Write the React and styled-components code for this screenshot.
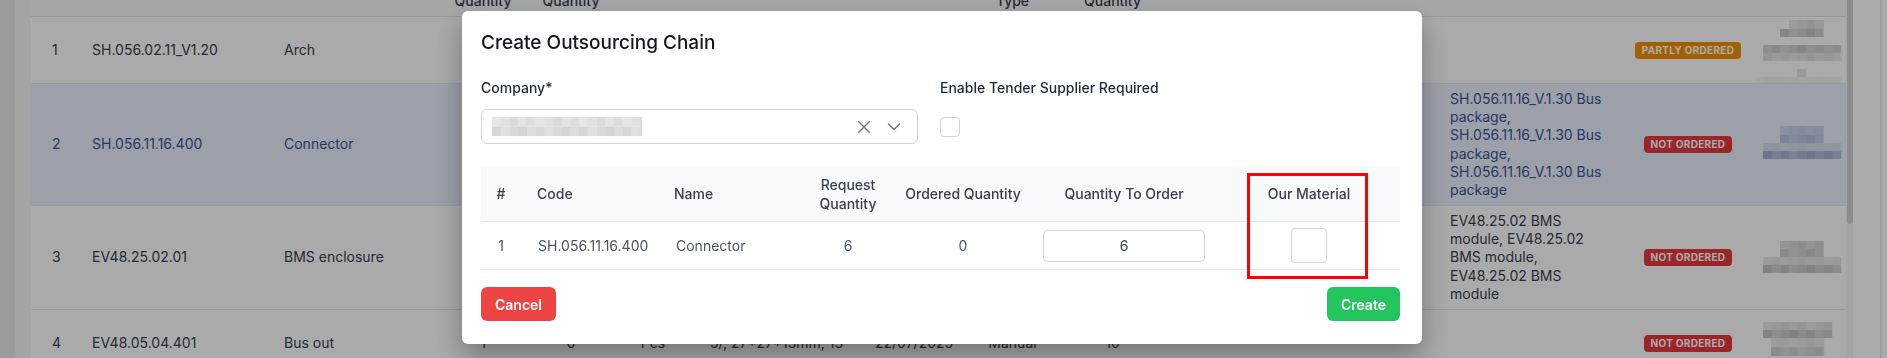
import React from 'react';
import styled, { createGlobalStyle } from 'styled-components';

const GlobalStyle = createGlobalStyle`
  html, body { margin: 0; padding: 0; }
  body {
    font-family: Inter, "Noto Sans", sans-serif;
    background: #ffffff;
    overflow: hidden;
    -webkit-font-smoothing: antialiased;
  }
  #root { height: 358px; overflow: hidden; }
`;

/* ---------- background page ---------- */

const Page = styled.div`
  display: flex;
  height: 358px;
  overflow: hidden;
  background: #ffffff;
`;

const SideStrip = styled.div`
  flex: 0 0 15px;
  background: #e9e9e9;
`;

const Gutter = styled.div`
  flex: 0 0 16px;
  background: #f6f6f6;
`;

const TableArea = styled.div`
  flex: 0 0 1815px;
  background: #ffffff;
  overflow: hidden;
  color: #374151;
  font-size: 14px;
`;

const ScrollTrack = styled.div`
  flex: 0 0 7px;
  background: #f7f7f7;
  display: flex;
  justify-content: center;
`;

const ScrollThumb = styled.div`
  width: 6px;
  height: 224px;
  background: #d3d3d8;
  border-radius: 0 0 3px 3px;
`;

const RightGutter = styled.div`
  flex: 1 1 auto;
  display: flex;
  justify-content: flex-end;
  background: #ffffff;
`;

const WindowEdge = styled.div`
  width: 5px;
  border-left: 2px solid #efefef;
  background: #ffffff;
`;

const BG_COLS = [
  { w: 40, al: 'left', pl: 21 },
  { w: 192, al: 'left', pl: 21 },
  { w: 177, al: 'left', pl: 21 },
  { w: 86, al: 'center', pl: 0 },
  { w: 90, al: 'center', pl: 0 },
  { w: 74, al: 'center', pl: 0 },
  { w: 170, al: 'left', pl: 20 },
  { w: 110, al: 'left', pl: 15 },
  { w: 85, al: 'center', pl: 0 },
  { w: 115, al: 'center', pl: 0 },
  { w: 259, al: 'left', pl: 21 },
  { w: 191, al: 'left', pl: 21, pr: 6 },
  { w: 136, al: 'center', pl: 0 },
  { w: 90, al: 'left', pl: 0 },
];
const bgTemplate = BG_COLS.map((c) => `${c.w}px`).join(' ');

const BgHeadRow = styled.div`
  display: grid;
  grid-template-columns: ${bgTemplate};
  height: 49px;
  margin-top: -32px;
  box-sizing: border-box;
  background: #f9fafb;
  border-bottom: 1px solid #dde2ea;
  font-weight: 500;
  color: #374151;
`;

const BgRow = styled.div`
  display: grid;
  grid-template-columns: ${bgTemplate};
  min-height: ${(p) => p.$h}px;
  box-sizing: border-box;
  border-bottom: 1px solid #e3e7ee;
  background: ${(p) => (p.$selected ? '#eaf0fd' : '#ffffff')};
  color: ${(p) => (p.$selected ? '#3a5596' : '#374151')};
`;

const BgCell = styled.div`
  display: flex;
  align-items: center;
  justify-content: ${(p) => (p.$align === 'center' ? 'center' : 'flex-start')};
  text-align: ${(p) => p.$align};
  padding-left: ${(p) => p.$pl}px;
  padding-right: ${(p) => p.$pr || 0}px;
  line-height: 18.3px;
  min-width: 0;
  white-space: nowrap;
`;

const StackLines = styled.div`
  display: flex;
  flex-direction: column;
  align-items: ${(p) => (p.$center ? 'center' : 'flex-start')};
  line-height: ${(p) => p.$lh}px;
`;

const Badge = styled.span`
  display: inline-flex;
  align-items: center;
  height: 17px;
  padding: 0 7px;
  border-radius: 4px;
  font-size: 10px;
  font-weight: 700;
  letter-spacing: 0.3px;
  color: #ffffff;
  background: ${(p) => (p.$tone === 'warn' ? '#f39200' : '#e83a3f')};
  white-space: nowrap;
`;

/* pixelated (redacted) content */
const Mosaic = ({ width, height, bands }) => {
  const rects = [];
  bands.forEach((b, bi) => {
    const [x0, y0, x1, y1, base] = b;
    const cell = 8.7;
    let i = 0;
    for (let x = x0; x < x1 - 0.5; x += cell, i += 1) {
      const w = Math.min(cell, x1 - x);
      const v = ((i * 7 + bi * 3) % 5) - 2;
      rects.push(
        <rect
          key={`${bi}-${i}`}
          x={x}
          y={y0}
          width={w + 0.2}
          height={y1 - y0}
          fill={base}
          fillOpacity={0.82 + v * 0.07}
        />
      );
    }
  });
  return (
    <svg width={width} height={height} viewBox={`0 0 ${width} ${height}`} style={{ display: 'block' }}>
      {rects}
    </svg>
  );
};

const RedactCell = styled.div`
  align-self: stretch;
`;

const rowsData = [
  {
    h: 67,
    n: '1',
    code: 'SH.056.02.11_V1.20',
    name: 'Arch',
    desc: [],
    status: ['warn', 'PARTLY ORDERED'],
    mosaic: [
      [33, 3, 68, 12, '#dcdcdc'],
      [24, 12, 68, 20, '#c4c4c4'],
      [7, 28, 85, 36, '#c8c8c8'],
      [7, 36, 85, 44, '#dedede'],
      [41, 52, 50, 60, '#e2e2e2'],
      [0, 60, 85, 66, '#f1f1f1'],
    ],
  },
  {
    h: 122,
    n: '2',
    code: 'SH.056.11.16.400',
    name: 'Connector',
    desc: ['SH.056.11.16_V.1.30 Bus', 'package,', 'SH.056.11.16_V.1.30 Bus', 'package,', 'SH.056.11.16_V.1.30 Bus', 'package'],
    status: ['danger', 'NOT ORDERED'],
    selected: true,
    mosaic: [
      [24, 42, 68, 51, '#c3cde3'],
      [24, 51, 68, 59, '#b4c0dc'],
      [7, 59, 85, 67, '#d2daea'],
      [7, 67, 85, 75, '#9fadcc'],
    ],
  },
  {
    h: 104,
    n: '3',
    code: 'EV48.25.02.01',
    name: 'BMS enclosure',
    desc: ['EV48.25.02 BMS', 'module, EV48.25.02', 'BMS module,', 'EV48.25.02 BMS', 'module'],
    status: ['danger', 'NOT ORDERED'],
    mosaic: [
      [24, 35, 68, 43, '#d2d2d2'],
      [24, 43, 68, 51, '#cacaca'],
      [7, 51, 85, 59, '#e2e2e2'],
      [7, 59, 85, 67, '#c0c0c0'],
    ],
  },
  {
    h: 67,
    n: '4',
    code: 'EV48.05.04.401',
    name: 'Bus out',
    mid: ['1', '0', 'Pcs', '5/, 27*27*13mm, 13', '22/07/2025', 'Manual', '10'],
    desc: [],
    status: ['danger', 'NOT ORDERED'],
    mosaic: [
      [7, 12, 76, 20, '#dedede'],
      [7, 20, 76, 28, '#bfbfbf'],
      [15, 28, 68, 37, '#e4e4e4'],
      [15, 37, 68, 46, '#d0d0d0'],
    ],
  },
];

const headLabels = [
  ['#'],
  ['Code'],
  ['Name'],
  ['Request', 'Quantity'],
  ['Ordered', 'Quantity'],
  ['Unit'],
  ['Specification'],
  ['Required Date'],
  ['Order', 'Type'],
  ['Ordered', 'Quantity'],
  [''],
  ['Description'],
  ['Status'],
  [''],
];

/* ---------- modal ---------- */

const Overlay = styled.div`
  position: fixed;
  inset: 0;
  background: rgba(0, 0, 0, 0.335);
  display: flex;
  justify-content: center;
  align-items: flex-start;
  padding: 11px 3px 0 0;
`;

const Modal = styled.div`
  width: 960px;
  box-sizing: border-box;
  padding: 20px 22px 23px 19px;
  background: #ffffff;
  border-radius: 6px;
  box-shadow: 0 12px 28px rgba(0, 0, 0, 0.32);
  color: #111827;
`;

const Title = styled.h2`
  margin: 0 0 23px;
  font-size: 19px;
  line-height: 24px;
  font-weight: 500;
  color: #111827;
`;

const FormGrid = styled.div`
  display: grid;
  grid-template-columns: 437px 1fr;
  column-gap: 22px;
  margin-bottom: 22px;
`;

const Field = styled.div`
  display: flex;
  flex-direction: column;
`;

const Label = styled.label`
  font-size: 14px;
  line-height: 20px;
  font-weight: 500;
  color: #1f2937;
  margin-bottom: 11px;
`;

const SelectBox = styled.div`
  height: 35px;
  box-sizing: border-box;
  border: 1px solid #d1d5db;
  border-radius: 6px;
  display: flex;
  align-items: center;
  padding: 0 16px 0 10px;
`;

const SelectValue = styled.div`
  flex: 1;
`;

const SelectIcons = styled.div`
  display: flex;
  align-items: center;
  gap: 16px;
  color: #6b7280;
`;

const ControlSlot = styled.div`
  height: 35px;
  display: flex;
  align-items: center;
`;

const Checkbox = styled.span`
  display: inline-block;
  width: ${(p) => p.$w}px;
  height: ${(p) => p.$h}px;
  box-sizing: border-box;
  border: 1px solid #d1d5db;
  border-radius: 4px;
  background: #ffffff;
`;

const M_COLS = [
  { w: 40, al: 'center', pl: 0 },
  { w: 137, al: 'left', pl: 16 },
  { w: 142, al: 'left', pl: 16 },
  { w: 96, al: 'center', pl: 0 },
  { w: 134, al: 'center', pl: 0 },
  { w: 188, al: 'center', pl: 0 },
  { w: 182, al: 'center', pl: 0 },
];
const mTemplate = M_COLS.map((c) => `${c.w}px`).join(' ');

const modalHeads = [['#'], ['Code'], ['Name'], ['Request', 'Quantity'], ['Ordered Quantity'], ['Quantity To Order'], ['Our Material']];

const TableWrap = styled.div`
  position: relative;
  width: 919px;
`;

const MHeadRow = styled.div`
  display: grid;
  grid-template-columns: ${mTemplate};
  height: 56px;
  box-sizing: border-box;
  background: #f8f9fb;
  border-bottom: 1px solid #e5e7eb;
  font-size: 14px;
  font-weight: 500;
  color: #374151;
`;

const MRow = styled.div`
  display: grid;
  grid-template-columns: ${mTemplate};
  height: 48px;
  box-sizing: border-box;
  border-bottom: 1px solid #e5e7eb;
  font-size: 14px;
  color: #4b5563;
`;

const MCell = styled.div`
  display: flex;
  align-items: center;
  justify-content: ${(p) => (p.$align === 'center' ? 'center' : 'flex-start')};
  text-align: ${(p) => p.$align};
  padding-left: ${(p) => p.$pl}px;
  line-height: 19px;
  white-space: nowrap;
`;

const QtyInput = styled.div`
  width: 162px;
  height: 32px;
  box-sizing: border-box;
  border: 1px solid #d1d5db;
  border-radius: 5px;
  display: flex;
  align-items: center;
  justify-content: center;
  color: #374151;
`;

const Annotation = styled.div`
  position: absolute;
  left: 766px;
  top: 7px;
  width: 121px;
  height: 106px;
  box-sizing: border-box;
  border: 3px solid #ff0000;
  pointer-events: none;
`;

const Footer = styled.div`
  display: flex;
  justify-content: space-between;
  margin-top: 17px;
  width: 919px;
`;

const Button = styled.button`
  height: 34px;
  padding: 0 ${(p) => p.$px}px;
  border: none;
  border-radius: 6px;
  font-family: inherit;
  font-size: 14px;
  font-weight: 600;
  color: #ffffff;
  background: ${(p) => (p.$variant === 'danger' ? '#ef4444' : '#22c55e')};
`;

const XIcon = () => (
  <svg width="14" height="14" viewBox="0 0 14 14" style={{ display: 'block' }}>
    <path d="M1.5 1.5 L12.5 12.5 M12.5 1.5 L1.5 12.5" stroke="currentColor" strokeWidth="1.4" strokeLinecap="round" fill="none" />
  </svg>
);

const ChevronIcon = () => (
  <svg width="14" height="8" viewBox="0 0 14 8" style={{ display: 'block' }}>
    <path d="M1.5 1 L7 6.5 L12.5 1" stroke="currentColor" strokeWidth="1.4" strokeLinecap="round" strokeLinejoin="round" fill="none" />
  </svg>
);

const selectMosaic = [
  [0, 0, 150, 9.5, '#d8dade'],
  [0, 9.5, 150, 19, '#cfd2d7'],
];

const Lines = ({ lines, center, lh }) => (
  <StackLines $center={center} $lh={lh}>
    {lines.map((t, k) => (
      <span key={k}>{t}</span>
    ))}
  </StackLines>
);

export default function App() {
  return (
    <>
      <GlobalStyle />
      <Page>
        <SideStrip />
        <Gutter />
        <TableArea>
          <BgHeadRow>
            {headLabels.map((l, i) => (
              <BgCell key={i} $align={BG_COLS[i].al} $pl={BG_COLS[i].pl} $pr={BG_COLS[i].pr}>
                <Lines lines={l} center={BG_COLS[i].al === 'center'} lh={18} />
              </BgCell>
            ))}
          </BgHeadRow>
          {rowsData.map((r) => {
            const mid = r.mid || ['', '', '', '', '', '', ''];
            const cells = [r.n, r.code, r.name, ...mid, ''];
            return (
              <BgRow key={r.n} $h={r.h} $selected={r.selected}>
                {cells.map((c, i) => (
                  <BgCell key={i} $align={BG_COLS[i].al} $pl={BG_COLS[i].pl} $pr={BG_COLS[i].pr}>
                    {c}
                  </BgCell>
                ))}
                <BgCell $align="left" $pl={BG_COLS[11].pl} $pr={BG_COLS[11].pr}>
                  <Lines lines={r.desc} lh={18.3} />
                </BgCell>
                <BgCell $align="center" $pl={0}>
                  <Badge $tone={r.status[0]}>{r.status[1]}</Badge>
                </BgCell>
                <RedactCell>
                  <Mosaic width={90} height={r.h - 1} bands={r.mosaic} />
                </RedactCell>
              </BgRow>
            );
          })}
        </TableArea>
        <ScrollTrack>
          <ScrollThumb />
        </ScrollTrack>
        <RightGutter>
          <WindowEdge />
        </RightGutter>
      </Page>

      <Overlay>
        <Modal>
          <Title>Create Outsourcing Chain</Title>
          <FormGrid>
            <Field>
              <Label>Company*</Label>
              <SelectBox>
                <SelectValue>
                  <Mosaic width={150} height={19} bands={selectMosaic} />
                </SelectValue>
                <SelectIcons>
                  <XIcon />
                  <ChevronIcon />
                </SelectIcons>
              </SelectBox>
            </Field>
            <Field>
              <Label>Enable Tender Supplier Required</Label>
              <ControlSlot>
                <Checkbox $w={20} $h={20} />
              </ControlSlot>
            </Field>
          </FormGrid>
          <TableWrap>
            <MHeadRow>
              {modalHeads.map((l, i) => (
                <MCell key={i} $align={M_COLS[i].al} $pl={M_COLS[i].pl}>
                  <Lines lines={l} center={M_COLS[i].al === 'center'} lh={19} />
                </MCell>
              ))}
            </MHeadRow>
            <MRow>
              <MCell $align="center" $pl={0}>1</MCell>
              <MCell $align="left" $pl={17}>SH.056.11.16.400</MCell>
              <MCell $align="left" $pl={18}>Connector</MCell>
              <MCell $align="center" $pl={0}>6</MCell>
              <MCell $align="center" $pl={0}>0</MCell>
              <MCell $align="center" $pl={0}>
                <QtyInput>6</QtyInput>
              </MCell>
              <MCell $align="center" $pl={0}>
                <Checkbox $w={36} $h={35} />
              </MCell>
            </MRow>
            <Annotation />
          </TableWrap>
          <Footer>
            <Button $variant="danger" $px={14}>Cancel</Button>
            <Button $variant="success" $px={14}>Create</Button>
          </Footer>
        </Modal>
      </Overlay>
    </>
  );
}
